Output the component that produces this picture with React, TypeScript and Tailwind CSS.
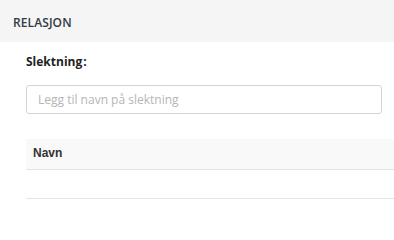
const openSans = { fontFamily: '"Open Sans", "Noto Sans", sans-serif' };

export default function App() {
  return (
    <div className="w-[394px] h-[200px] overflow-hidden bg-white" style={openSans}>
      <div className="h-[42px] flex items-center px-[13px] pt-[3px] bg-[#f5f5f5]">
        <span className="text-[12px] font-semibold text-[#333a44] tracking-[0.1px]">RELASJON</span>
      </div>

      <div className="pl-[26px]">
        <div className="mt-[11px] text-[12px] leading-[18px] font-bold text-[#222]">
          Slektning<span className="ml-[1px]">:</span>
        </div>

        <div className="mt-[14px] mr-[12px]">
          <input
            type="text"
            placeholder="Legg til navn på slektning"
            className="block w-full h-[29px] rounded-[3px] border border-[#d4d4d4] px-[11px] text-[12px] text-[#333] placeholder:text-[#b5b5b5] outline-none"
            style={openSans}
          />
        </div>

        <table className="mt-[25px] w-full border-collapse" style={{ fontFamily: '"Liberation Sans", Arial, sans-serif' }}>
          <thead>
            <tr className="bg-[#f9f9f9] border-b border-[#e4e4e4]">
              <th className="h-[30px] px-[7px] pb-[1px] text-left text-[12px] font-bold text-[#333]">Navn</th>
            </tr>
          </thead>
          <tbody>
            <tr className="border-b border-[#e4e4e4]">
              <td className="h-[29px]"></td>
            </tr>
          </tbody>
        </table>
      </div>
    </div>
  );
}
